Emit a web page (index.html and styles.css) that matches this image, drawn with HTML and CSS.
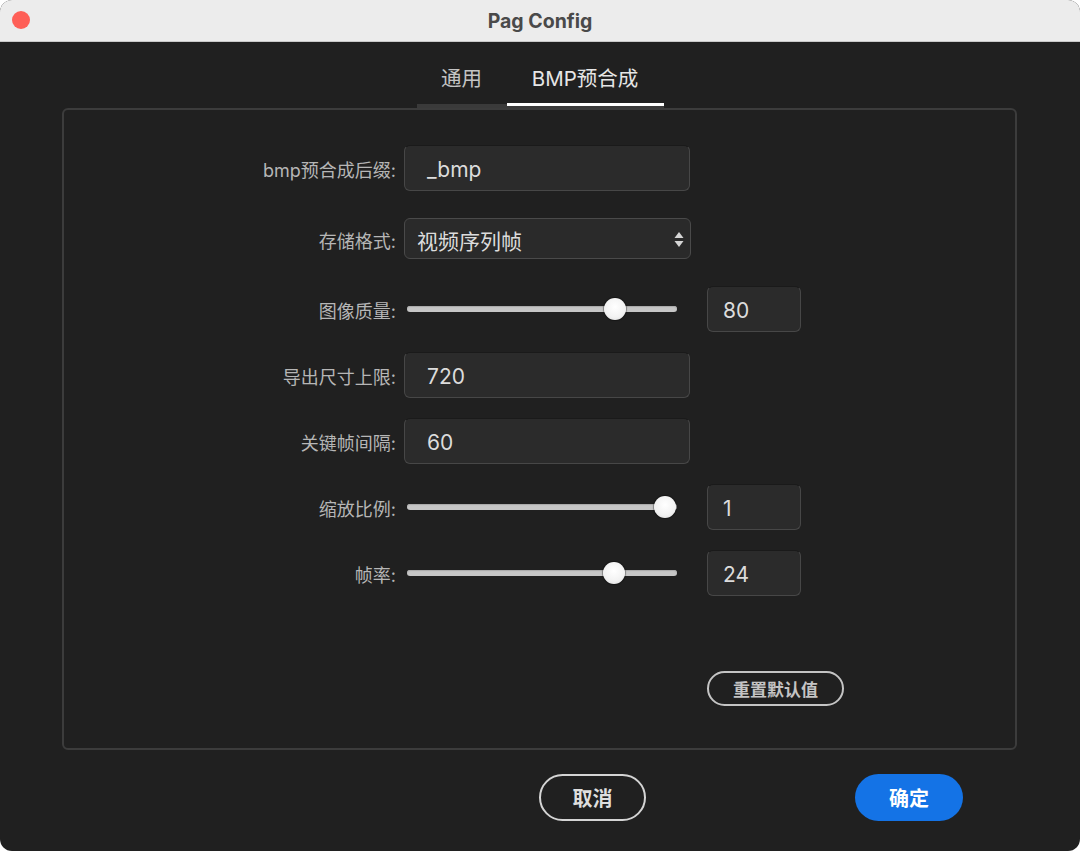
FILE: index.html
```html
<!DOCTYPE html>
<html lang="zh-CN">
<head>
<meta charset="UTF-8">
<meta name="viewport" content="width=device-width, initial-scale=1.0">
<title>Pag Config</title>
<link rel="stylesheet" href="styles.css">
</head>
<body>
<div class="window">
  <div class="titlebar">
    <span class="close-dot"></span>
    <span class="title">Pag Config</span>
  </div>
  <div class="content">
    <div class="tabs">
      <div class="tab">通用</div>
      <div class="tab active">BMP预合成</div>
    </div>
    <div class="panel">
      <div class="row">
        <label class="label">bmp预合成后缀:</label>
        <div class="field">_bmp</div>
      </div>
      <div class="row row-select">
        <label class="label">存储格式:</label>
        <div class="field select">
          <span>视频序列帧</span>
          <svg class="arrows" width="10" height="15" viewBox="0 0 10 15">
            <path d="M5 0 L9.5 6 L0.5 6 Z" fill="#d6d6d6"/>
            <path d="M5 15 L9.5 9 L0.5 9 Z" fill="#d6d6d6"/>
          </svg>
        </div>
      </div>
      <div class="row">
        <label class="label">图像质量:</label>
        <div class="slider"><div class="track"></div><div class="thumb" style="left: 73.8%"></div></div>
        <div class="field num">80</div>
      </div>
      <div class="row row-tight">
        <label class="label">导出尺寸上限:</label>
        <div class="field">720</div>
      </div>
      <div class="row row-tight">
        <label class="label">关键帧间隔:</label>
        <div class="field">60</div>
      </div>
      <div class="row row-tight">
        <label class="label">缩放比例:</label>
        <div class="slider"><div class="track"></div><div class="thumb" style="left: 91.3%"></div></div>
        <div class="field num">1</div>
      </div>
      <div class="row row-tight">
        <label class="label">帧率:</label>
        <div class="slider"><div class="track"></div><div class="thumb" style="left: 73.4%"></div></div>
        <div class="field num">24</div>
      </div>
      <div class="reset-row">
        <button class="btn-outline small">重置默认值</button>
      </div>
    </div>
    <div class="footer">
      <button class="btn-outline">取消</button>
      <button class="btn-primary">确定</button>
    </div>
  </div>
</div>
</body>
</html>
```

FILE: styles.css
```css
body {
  margin: 0;
  background: #ffffff;
  font-family: "Inter", "Noto Sans CJK SC", sans-serif;
}
.window {
  width: 1080px;
  height: 851px;
  border-radius: 12px;
  overflow: hidden;
  background: #202020;
  display: flex;
  flex-direction: column;
}
.titlebar {
  height: 41px;
  background: #ececec;
  border-bottom: 1px solid #c9c9c9;
  display: flex;
  align-items: center;
  justify-content: center;
  position: relative;
}
.close-dot {
  position: absolute;
  left: 12px;
  top: 11px;
  width: 18px;
  height: 18px;
  border-radius: 50%;
  background: #fe5f57;
}
.title {
  font-size: 19.5px;
  font-weight: 700;
  color: #4a4a4a;
}
.content {
  flex: 1;
  display: flex;
  flex-direction: column;
}
.tabs {
  display: flex;
  justify-content: center;
  margin-top: 20px;
}
.tab {
  font-size: 20.5px;
  color: #c4c4c4;
  height: 42px;
  line-height: 34px;
  border-bottom: 4px solid #3a3a3a;
  width: 90px;
  text-align: center;
  box-sizing: content-box;
}
.tab.active {
  width: 157px;
  color: #e6e6e6;
  position: relative;
}
.tab.active::after {
  content: "";
  position: absolute;
  left: 0;
  right: 0;
  bottom: -2px;
  height: 3px;
  background: #ffffff;
}
.panel {
  margin: 0 63px 0 62px;
  height: 603px;
  border: 2px solid #3c3c3c;
  border-radius: 6px;
  padding-top: 35px;
  box-sizing: content-box;
}
.row {
  display: flex;
  align-items: center;
  height: 46px;
  margin-bottom: 27px;
}
.row-select {
  height: 41px;
}
.row-tight {
  margin-top: -7px;
}
.label {
  width: 340px;
  padding-right: 8px;
  box-sizing: border-box;
  text-align: right;
  font-size: 18px;
  color: #b6b6b6;
  padding-top: 2px;
}
.field {
  width: 286px;
  height: 46px;
  box-sizing: border-box;
  background: #2b2b2b;
  border: 1px solid #474747;
  border-top-color: #1a1a1a;
  border-radius: 6px;
  padding-left: 22px;
  padding-top: 2px;
  font-size: 21px;
  color: #dcdcdc;
  display: flex;
  align-items: center;
}
.select {
  height: 41px;
  width: 287px;
  border-color: #4a4a4a;
  padding-left: 12px;
  justify-content: space-between;
  padding-right: 6px;
  background: #2a2a2a;
}
.num {
  width: 94px;
  padding-left: 15px;
}
.slider {
  width: 286px;
  height: 24px;
  position: relative;
  margin-right: 17px;
}
.track {
  position: absolute;
  left: 3px;
  width: 270px;
  top: 9px;
  height: 6px;
  border-radius: 3px;
  background: #c6c6c6;
  box-shadow: inset 0 1px 1px #a8a8a8;
}
.thumb {
  position: absolute;
  top: 1px;
  width: 22px;
  height: 22px;
  margin-left: -11px;
  border-radius: 50%;
  background: radial-gradient(circle at 50% 40%, #ffffff 0%, #f2f2f2 60%, #d8d8d8 100%);
  box-shadow: 0 0 1px 1px rgba(0, 0, 0, 0.35);
}
.reset-row {
  display: flex;
  padding-left: 643px;
  margin-top: 75px;
}
.btn-outline {
  font-family: inherit;
  background: transparent;
  border: 2px solid #d4d4d4;
  border-radius: 24px;
  color: #dedede;
  font-size: 20px;
  font-weight: 700;
  width: 107px;
  height: 47px;
  padding: 0;
}
.btn-outline.small {
  width: 137px;
  height: 35px;
  font-size: 17px;
  border-color: #c4c4c4;
  color: #c4c4c4;
}
.btn-primary {
  font-family: inherit;
  background: #1473e6;
  border: none;
  border-radius: 24px;
  color: #ffffff;
  font-size: 20px;
  font-weight: 700;
  width: 108px;
  height: 47px;
  padding: 0;
}
.footer {
  display: flex;
  justify-content: flex-end;
  gap: 209px;
  padding-right: 117px;
  margin-top: 24px;
}
```
